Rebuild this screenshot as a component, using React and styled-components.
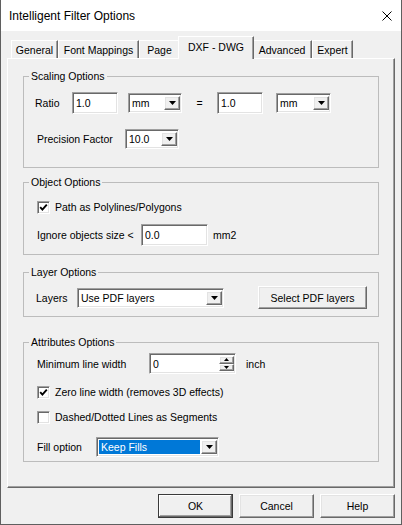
import React from 'react';
import styled, { createGlobalStyle, css } from 'styled-components';

const GlobalStyle = createGlobalStyle`
  html, body {
    margin: 0;
    padding: 0;
    background: #f0f0f0;
  }
  body {
    font-family: "Liberation Sans", Arial, sans-serif;
  }
`;

const raised = css`
  border-top: 1px solid #ffffff;
  border-left: 1px solid #ffffff;
  border-right: 1px solid #696969;
  border-bottom: 1px solid #696969;
  box-shadow: inset -1px -1px 0 #a0a0a0, inset 1px 1px 0 #e3e3e3;
`;

const sunken = css`
  border-top: 1px solid #a0a0a0;
  border-left: 1px solid #a0a0a0;
  border-right: 1px solid #ffffff;
  border-bottom: 1px solid #ffffff;
  box-shadow: inset 1px 1px 0 #696969, inset -1px -1px 0 #e3e3e3;
`;

const Window = styled.div`
  width: 402px;
  height: 525px;
  box-sizing: border-box;
  background: #f0f0f0;
  border: 1px solid #5f5f5f;
  border-top: none;
  display: flex;
  flex-direction: column;
  font-size: 10.5px;
  color: #000;
`;

const TitleBar = styled.div`
  height: 31px;
  flex-shrink: 0;
  background: #ffffff;
  display: flex;
  align-items: center;
  justify-content: space-between;
  padding: 0 9px 0 8px;
  font-size: 12px;
`;

const Body = styled.div`
  padding: 5px 6px 0 6px;
  display: flex;
  flex-direction: column;
`;

const TabStrip = styled.div`
  height: 22px;
  display: flex;
  align-items: flex-end;
  padding-left: 4px;
`;

const Tab = styled.div`
  box-sizing: border-box;
  width: ${p => p.w}px;
  height: 18px;
  display: flex;
  align-items: center;
  justify-content: center;
  white-space: nowrap;
  background: #f0f0f0;
  border-top: 1px solid #ffffff;
  border-left: 1px solid #ffffff;
  border-right: 1px solid #696969;
  box-shadow: inset -1px 0 0 #a0a0a0;
  ${p => p.active && css`
    width: ${p.w + 4}px;
    height: 23px;
    margin: 0 -2px -1px -2px;
    padding-bottom: 2px;
    position: relative;
    z-index: 1;
  `}
`;

const Panel = styled.div`
  box-sizing: border-box;
  width: 388px;
  height: 430px;
  ${raised}
  box-shadow: inset -1px -1px 0 #a0a0a0;
  display: flex;
  flex-direction: column;
`;

const Group = styled.div`
  box-sizing: border-box;
  width: 356px;
  height: ${p => p.h}px;
  margin: ${p => p.mt}px 0 0 15px;
  border: 1px solid #bcbcbc;
  flex-shrink: 0;
`;

const GroupTitle = styled.div`
  width: fit-content;
  height: 13px;
  line-height: 13px;
  margin: -7px 0 0 5px;
  padding: 0 2px;
  background: #f0f0f0;
  white-space: nowrap;
`;

const Row = styled.div`
  display: flex;
  align-items: center;
  height: ${p => p.h}px;
  margin-top: ${p => p.mt}px;
  padding-left: ${p => p.pl}px;
`;

const Label = styled.span`
  width: ${p => (p.w ? `${p.w}px` : 'auto')};
  margin-left: ${p => p.ml || 0}px;
  text-align: ${p => p.center ? 'center' : 'left'};
  flex-shrink: 0;
  white-space: nowrap;
`;

const Field = styled.div`
  box-sizing: border-box;
  width: ${p => p.w}px;
  height: ${p => p.h}px;
  margin-left: ${p => p.ml || 0}px;
  background: #ffffff;
  ${sunken}
  display: flex;
  align-items: center;
  padding: 2px 2px 2px 3px;
  flex-shrink: 0;
  white-space: nowrap;
`;

const FieldText = styled.span`
  flex: 1;
  overflow: hidden;
`;

const Selection = styled.span`
  flex: 1;
  align-self: stretch;
  display: flex;
  align-items: center;
  margin-left: -1px;
  margin-right: 1px;
  padding-left: 2px;
  background: #0078d7;
  color: #ffffff;
`;

const DropButton = styled.div`
  box-sizing: border-box;
  width: 16px;
  align-self: stretch;
  margin-right: -1px;
  background: #f0f0f0;
  ${raised}
  display: flex;
  align-items: center;
  justify-content: center;
`;

const SpinColumn = styled.div`
  display: flex;
  flex-direction: column;
  align-self: stretch;
  width: 15px;
  margin-right: -1px;
`;

const SpinButton = styled.div`
  flex: 1;
  box-sizing: border-box;
  background: #f0f0f0;
  ${raised}
  display: flex;
  align-items: center;
  justify-content: center;
`;

const CheckBox = styled.div`
  box-sizing: border-box;
  width: 13px;
  height: 13px;
  background: #ffffff;
  ${sunken}
  display: flex;
  align-items: center;
  justify-content: center;
  flex-shrink: 0;
  margin-right: 5px;
`;

const PushButton = styled.div`
  box-sizing: border-box;
  width: ${p => p.w}px;
  height: ${p => p.h || 23}px;
  margin-left: ${p => p.ml || 0}px;
  background: #f0f0f0;
  ${raised}
  display: flex;
  align-items: center;
  justify-content: center;
  flex-shrink: 0;
  white-space: nowrap;
  ${p => p.primary && css`
    border: 1px solid #3a3a3a;
    box-shadow: inset -1px -1px 0 #696969, inset 1px 1px 0 #ffffff, inset -2px -2px 0 #a0a0a0;
  `}
`;

const Footer = styled.div`
  display: flex;
  justify-content: flex-end;
  gap: 6px;
  margin-top: 6px;
`;

const Arrow = ({ up }) => (
  <svg width="7" height="4" viewBox="0 0 7 4">
    <polygon points={up ? '3.5,0 7,4 0,4' : '0,0 7,0 3.5,4'} fill="#000" />
  </svg>
);

const SmallArrow = ({ up }) => (
  <svg width="5" height="3" viewBox="0 0 5 3">
    <polygon points={up ? '2.5,0 5,3 0,3' : '0,0 5,0 2.5,3'} fill="#000" />
  </svg>
);

const Combo = ({ w, h = 20, ml, value, selected }) => (
  <Field w={w} h={h} ml={ml}>
    {selected ? <Selection>{value}</Selection> : <FieldText>{value}</FieldText>}
    <DropButton><Arrow /></DropButton>
  </Field>
);

const Check = ({ checked, children }) => (
  <>
    <CheckBox>
      {checked && (
        <svg width="9" height="9" viewBox="0 0 9 9">
          <polyline points="1.2,4.2 3.4,6.6 7.8,1.6" fill="none" stroke="#000" strokeWidth="1.9" />
        </svg>
      )}
    </CheckBox>
    <Label>{children}</Label>
  </>
);

const tabs = [
  ['General', 47],
  ['Font Mappings', 81],
  ['Page', 41],
  ['DXF - DWG', 72],
  ['Advanced', 60],
  ['Expert', 41],
];

export default function App() {
  return (
    <>
      <GlobalStyle />
      <Window>
        <TitleBar>
          <span>Intelligent Filter Options</span>
          <svg width="10" height="10" viewBox="0 0 10 10">
            <path d="M0.5 0.5 L9.5 9.5 M9.5 0.5 L0.5 9.5" stroke="#000" strokeWidth="1" />
          </svg>
        </TitleBar>
        <Body>
          <TabStrip>
            {tabs.map(([name, w]) => (
              <Tab key={name} w={w} active={name === 'DXF - DWG'}>{name}</Tab>
            ))}
          </TabStrip>
          <Panel>
            <Group h={92} mt={17}>
              <GroupTitle>Scaling Options</GroupTitle>
              <Row h={22} mt={9} pl={11}>
                <Label w={37}>Ratio</Label>
                <Field w={46} h={22}><FieldText>1.0</FieldText></Field>
                <Combo w={54} ml={10} value="mm" />
                <Label w={35} center>=</Label>
                <Field w={46} h={22}><FieldText>1.0</FieldText></Field>
                <Combo w={55} ml={13} value="mm" />
              </Row>
              <Row h={20} mt={15} pl={13}>
                <Label w={88}>Precision Factor</Label>
                <Combo w={54} value="10.0" />
              </Row>
            </Group>

            <Group h={73} mt={14}>
              <GroupTitle>Object Options</GroupTitle>
              <Row h={16} mt={10} pl={13}>
                <Check checked>Path as Polylines/Polygons</Check>
              </Row>
              <Row h={22} mt={9} pl={13}>
                <Label w={104}>Ignore objects size &lt;</Label>
                <Field w={67} h={22}><FieldText>0.0</FieldText></Field>
                <Label ml={5}>mm2</Label>
              </Row>
            </Group>

            <Group h={45} mt={17}>
              <GroupTitle>Layer Options</GroupTitle>
              <Row h={23} mt={7} pl={12}>
                <Label w={41}>Layers</Label>
                <Combo w={147} value="Use PDF layers" />
                <PushButton w={109} ml={34}>Select PDF layers</PushButton>
              </Row>
            </Group>

            <Group h={120} mt={25}>
              <GroupTitle>Attributes Options</GroupTitle>
              <Row h={21} mt={4} pl={13}>
                <Label w={112}>Minimum line width</Label>
                <Field w={87} h={21}>
                  <FieldText>0</FieldText>
                  <SpinColumn>
                    <SpinButton><SmallArrow up /></SpinButton>
                    <SpinButton><SmallArrow /></SpinButton>
                  </SpinColumn>
                </Field>
                <Label ml={10}>inch</Label>
              </Row>
              <Row h={16} mt={10} pl={13}>
                <Check checked>Zero line width (removes 3D effects)</Check>
              </Row>
              <Row h={16} mt={9} pl={13}>
                <Check>Dashed/Dotted Lines as Segments</Check>
              </Row>
              <Row h={20} mt={12} pl={13}>
                <Label w={59}>Fill option</Label>
                <Combo w={123} value="Keep Fills" selected />
              </Row>
            </Group>
          </Panel>
          <Footer>
            <PushButton w={75} h={24} primary>OK</PushButton>
            <PushButton w={75} h={24}>Cancel</PushButton>
            <PushButton w={75} h={24}>Help</PushButton>
          </Footer>
        </Body>
      </Window>
    </>
  );
}
